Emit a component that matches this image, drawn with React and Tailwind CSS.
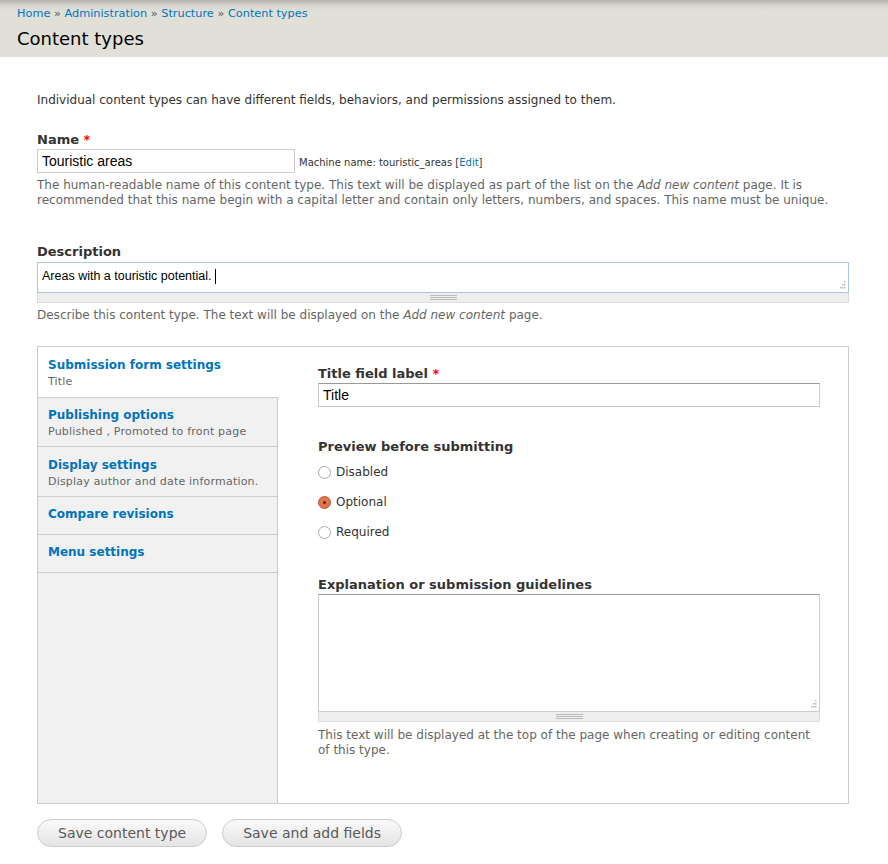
import React, { useState } from "react";

const ui = { fontFamily: '"DejaVu Sans", Verdana, sans-serif' };
const field = { fontFamily: '"Liberation Sans", Arial, sans-serif' };

const Grip = () => (
  <div className="h-[10px] bg-[#eeeeee] border border-t-0 border-[#dddddd] flex flex-col items-center justify-center gap-[1px]">
    <div className="w-[27px] h-px bg-[#bbbbbb]" />
    <div className="w-[27px] h-px bg-[#bbbbbb]" />
    <div className="w-[27px] h-px bg-[#bbbbbb]" />
  </div>
);

const ResizeDots = () => (
  <svg className="absolute right-[2px] bottom-[2px]" width="10" height="10" viewBox="0 0 10 10">
    {[[8, 1], [6, 4], [8, 4], [4, 7], [6, 7], [8, 7]].map(([x, y], i) => (
      <rect key={i} x={x} y={y} width="1.5" height="1.5" fill="#bbbbbb" />
    ))}
  </svg>
);

const Radio = ({ label, checked, onClick }) => (
  <label className="flex items-center gap-[5px] text-[12px] text-[#333] h-[30px] cursor-pointer" onClick={onClick}>
    {checked ? (
      <span className="w-[13px] h-[13px] rounded-full bg-[#e2744b] border border-[#c2572f] flex items-center justify-center">
        <span className="w-[3px] h-[3px] rounded-full bg-[#5a2614]" />
      </span>
    ) : (
      <span className="w-[13px] h-[13px] rounded-full bg-white border border-[#aaaaaa]" />
    )}
    {label}
  </label>
);

// padding per tab so the rows line up with the screenshot
const tabs = [
  { title: "Submission form settings", sub: "Title", cls: "bg-white -mr-px pt-[10px] pb-[7px]" },
  { title: "Publishing options", sub: "Published , Promoted to front page", cls: "pt-[9px] pb-[6px]" },
  { title: "Display settings", sub: "Display author and date information.", cls: "pt-[10px] pb-[6px]" },
  { title: "Compare revisions", cls: "pt-[9px] pb-[11px]" },
  { title: "Menu settings", cls: "pt-[9px] pb-[11px]" },
];

export default function App() {
  const [preview, setPreview] = useState("Optional");

  return (
    <div className="min-h-screen bg-white text-[#333]" style={ui}>
      <div className="h-[57px] bg-[linear-gradient(#b3b2ac_0px,#d8d7d0_6px,#e0dfd8_12px,#e0dfd8)] px-[17px] pt-[6px]">
        <div className="text-[11.3px] text-[#0074bd] leading-[16px]">
          Home <span className="text-[#555]">»</span> Administration <span className="text-[#555]">»</span> Structure{" "}
          <span className="text-[#555]">»</span> Content types
        </div>
        <h1 className="text-[18px] text-black leading-[24px] mt-[5px]">Content types</h1>
      </div>

      <div className="pl-[37px] pr-[39px] pt-[34px]">
        <p className="text-[12px] leading-[18px]">
          Individual content types can have different fields, behaviors, and permissions assigned to them.
        </p>

        <div className="mt-[23px]">
          <div className="text-[13px] font-bold leading-[16px]">
            Name <span className="text-[#ff0000]">*</span>
          </div>
          <div className="flex items-center mt-[1px]">
            <div className="w-[258px] h-[24px] border border-[#cccccc] px-[4px] flex items-center text-[14px] text-black" style={field}>
              Touristic areas
            </div>
            <span className="text-[10px] ml-[4px] mt-[2px]">
              Machine name: touristic_areas [<span className="text-[#0074bd]">Edit</span>]
            </span>
          </div>
          <p className="text-[12px] leading-[15px] text-[#666] mt-[5px]">
            The human-readable name of this content type. This text will be displayed as part of the list on the{" "}
            <em>Add new content</em> page. It is recommended that this name begin with a capital letter and contain
            only letters, numbers, and spaces. This name must be unique.
          </p>
        </div>

        <div className="mt-[36px]">
          <div className="text-[13px] font-bold leading-[16px]">Description</div>
          <div className="relative h-[31px] border border-[#a8c6ea] px-[4px] pt-[4px] text-[12.5px] text-black mt-[2px]" style={field}>
            Areas with a touristic potential. <span className="inline-block w-px h-[15px] bg-black align-middle" />
            <ResizeDots />
          </div>
          <Grip />
          <p className="text-[12px] leading-[15px] text-[#666] mt-[5px]">
            Describe this content type. The text will be displayed on the <em>Add new content</em> page.
          </p>
        </div>

        <div className="mt-[23px] h-[458px] border border-[#cccccc] flex">
          <div className="w-[240px] bg-[#f1f1f1] border-r border-[#cccccc] flex flex-col">
            {tabs.map((t) => (
              <div key={t.title} className={"px-[10px] border-b border-[#cccccc] " + t.cls}>
                <div className="text-[12px] font-bold text-[#0074bd] leading-[17px]">{t.title}</div>
                {t.sub && <div className="text-[11px] text-[#666] leading-[16px] tracking-[0.2px]">{t.sub}</div>}
              </div>
            ))}
          </div>

          <div className="flex-1 pl-[40px] pr-[28px] pt-[19px]">
            <div className="text-[13px] font-bold leading-[16px]">
              Title field label <span className="text-[#ff0000]">*</span>
            </div>
            <div className="h-[24px] border border-[#cccccc] border-t-[#999] px-[4px] flex items-center text-[14px] text-black mt-[1px]" style={field}>
              Title
            </div>

            <div className="text-[13px] font-bold leading-[16px] mt-[32px]">Preview before submitting</div>
            <div className="mt-[2px]">
              {["Disabled", "Optional", "Required"].map((o) => (
                <Radio key={o} label={o} checked={preview === o} onClick={() => setPreview(o)} />
              ))}
            </div>

            <div className="text-[13px] font-bold leading-[16px] mt-[30px]">Explanation or submission guidelines</div>
            <div className="relative h-[118px] border border-[#cccccc] border-t-[#999] mt-[1px]">
              <ResizeDots />
            </div>
            <Grip />
            <p className="text-[12px] leading-[15px] text-[#666] mt-[6px]">
              This text will be displayed at the top of the page when creating or editing content of this type.
            </p>
          </div>
        </div>

        <div className="flex gap-[15px] mt-[15px]">
          {["Save content type", "Save and add fields"].map((b) => (
            <button
              key={b}
              className="h-[28px] px-[20px] rounded-full border border-[#cccccc] bg-[linear-gradient(#fafafa,#e4e4e4)] text-[14px] text-[#5a5a5a]"
              style={ui}
            >
              {b}
            </button>
          ))}
        </div>
      </div>
    </div>
  );
}
